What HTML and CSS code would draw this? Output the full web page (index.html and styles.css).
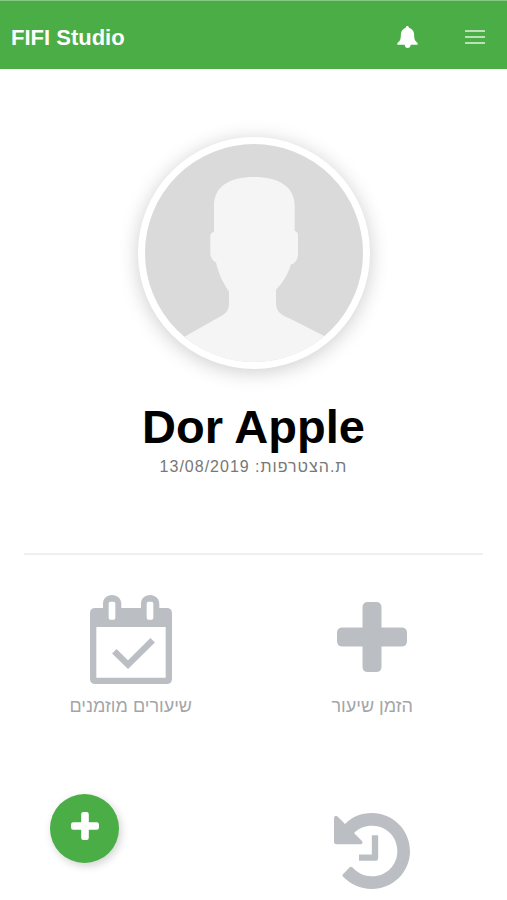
FILE: index.html
```html
<!DOCTYPE html>
<html lang="he" dir="rtl">
<head>
<meta charset="utf-8">
<meta name="viewport" content="width=device-width, initial-scale=1">
<title>FIFI Studio</title>
<link rel="stylesheet" href="styles.css">
</head>
<body>
<header class="topbar">
  <button class="bar-button" type="button" aria-label="תפריט">
    <svg width="20" height="14" viewBox="0 0 20 14" fill="none" stroke="currentColor" stroke-width="1.5"><path d="M0 1h20M0 7h20M0 13h20"/></svg>
  </button>
  <button class="bar-button bar-button-bell" type="button" aria-label="התראות">
    <svg width="21" height="22" viewBox="0 0 63 66" fill="currentColor"><path d="M31 0c3 0 4 2 5 5 9 3 14 9 15 17 1 9 0 17 4 22 2 3 7 5 7 9v3H41c0 6-4 10-9 10s-9-4-9-10H1v-3c0-4 5-6 7-9 4-5 3-13 4-22 1-8 6-14 14-17 1-3 2-5 5-5z"/></svg>
  </button>
  <a class="brand" href="#" dir="ltr">FIFI Studio</a>
</header>
<main>
  <section class="profile">
    <div class="avatar">
      <svg viewBox="57 57 654 654" fill="#f5f5f5"><path d="M264 320V242C264 185 310 156 384 156S506 185 506 242V318C513 320 516 324 516 330V386C515 405 507 417 495 418C486 448 468 478 450 494V534C450 556 462 570 490 580L596 634L720 720H40L178 634L280 576C300 566 309 555 309 536V500C294 478 277 448 270 412C260 408 254 396 253 386V330C254 326 258 322 264 320Z"/></svg>
    </div>
    <h1 class="name" dir="ltr">Dor Apple</h1>
    <p class="joined">ת.הצטרפות: 13/08/2019</p>
  </section>
  <nav class="actions">
    <a class="action" href="#">
      <span class="action-icon"><svg width="70" height="70" viewBox="0 0 70 70" fill="currentColor"><path d="M31 0h8q5.500 0 5.500 5.500v20h20q5.500 0 5.500 5.500v8q0 5.500-5.500 5.500h-20v20q0 5.500-5.500 5.500h-8q-5.500 0-5.500-5.500v-20h-20q-5.500 0-5.500-5.500v-8q0-5.500 5.500-5.500h20v-20q0-5.500 5.500-5.500z"/></svg></span>
      <span>הזמן שיעור</span>
    </a>
    <a class="action" href="#">
      <span class="action-icon"><svg class="calendar" width="82" height="89" viewBox="0 0 246 267"><path fill="currentColor" fill-rule="evenodd" d="M16 39H39V27C39 11 50 0 66 0S94 11 94 27V39H153V27C153 11 164 0 180 0S208 11 208 27V39H230Q246 39 246 55V251Q246 267 230 267H16Q0 267 0 251V55Q0 39 16 39ZM19 96V248H227V96ZM61 20Q56 20 56 26V68Q56 74 61 74H71Q76 74 76 68V26Q76 20 71 20ZM175 20Q170 20 170 26V68Q170 74 175 74H185Q190 74 190 68V26Q190 20 185 20Z"/><path fill="none" stroke="currentColor" stroke-width="19" d="M73 169L114 209L188 136"/></svg></span>
      <span>שיעורים מוזמנים</span>
    </a>
    <a class="action" href="#" aria-label="היסטוריה">
      <span class="action-icon"><svg width="76" height="76" viewBox="0 0 228 228"><path fill="currentColor" d="M33 33C54 11 82 0 113 0C177 0 228 51 228 114S177 228 113 228C79 228 48 213 26 190Q24 187 27 184L47 163Q51 159 55 163C70 180 90 190 114 190C157 190 190 157 190 114S157 38 114 38C93 38 75 45 60 60L84 84Q89 92 80 94H7Q0 94 0 87V16Q1 5 10 10Z"/><path fill="none" stroke="currentColor" stroke-width="19" stroke-linejoin="round" d="M123 67V134H75"/></svg></span>
    </a>
  </nav>
</main>
<button class="fab" type="button" aria-label="הוספה">
  <svg width="28" height="28" viewBox="0 0 70 70" fill="currentColor"><path d="M31 0h8q5.500 0 5.500 5.500v20h20q5.500 0 5.500 5.500v8q0 5.500-5.500 5.500h-20v20q0 5.500-5.500 5.500h-8q-5.500 0-5.500-5.500v-20h-20q-5.500 0-5.500-5.500v-8q0-5.500 5.500-5.500h20v-20q0-5.500 5.500-5.500z"/></svg>
</button>
</body>
</html>
```

FILE: styles.css
```css
* {
  box-sizing: border-box;
}

body {
  margin: 0;
  background: #fff;
  font-family: "Liberation Sans", sans-serif;
}

button {
  border: 0;
  padding: 0;
  cursor: pointer;
}

svg {
  display: block;
}

.topbar {
  display: flex;
  align-items: center;
  justify-content: flex-start;
  height: 69px;
  padding-top: 4px;
  border-top: 1px solid #85c881;
  background: #4aad45;
  color: #fff;
}

.bar-button {
  display: flex;
  align-items: center;
  justify-content: center;
  width: 64px;
  height: 64px;
  background: none;
  color: #e1f2df;
}

.bar-button-bell {
  width: 72px;
  color: #fff;
}

.brand {
  margin-right: auto;
  padding: 2px 11px 0;
  color: #fff;
  font-size: 22px;
  font-weight: bold;
  text-decoration: none;
}

.profile {
  display: flex;
  flex-direction: column;
  align-items: center;
  margin: 0 24px;
  padding: 68px 0 76px;
  border-bottom: 2px solid #efefef;
}

.avatar {
  width: 232px;
  height: 232px;
  border: 7px solid #fff;
  border-radius: 50%;
  background: #dadada;
  box-shadow: 0 3px 20px rgba(0, 0, 0, 0.2);
}

.avatar svg {
  width: 100%;
  border-radius: 50%;
}

.name {
  margin: 31px 0 3px;
  color: #000;
  font-size: 47px;
  line-height: 54px;
}

.joined {
  margin: 0;
  color: #777;
  font-size: 16px;
  line-height: 20px;
  letter-spacing: 1px;
}

.actions {
  display: grid;
  grid-template-columns: 1fr 1fr;
  row-gap: 86px;
  padding: 35px 14px 0 10px;
}

.action {
  display: flex;
  flex-direction: column;
  align-items: center;
  gap: 10px;
  color: #a3a6a8;
  font-size: 18px;
  line-height: 24px;
  text-decoration: none;
}

.action-icon {
  display: flex;
  align-items: center;
  height: 94px;
  color: #bbbfc4;
}

.calendar {
  margin-top: 4px;
}

.fab {
  position: fixed;
  left: 50px;
  bottom: 37px;
  display: flex;
  justify-content: center;
  width: 69px;
  height: 69px;
  padding-top: 18px;
  border-radius: 50%;
  background: #4aad45;
  box-shadow: 2px 3px 8px rgba(0, 0, 0, 0.18);
  color: #fff;
}
```
